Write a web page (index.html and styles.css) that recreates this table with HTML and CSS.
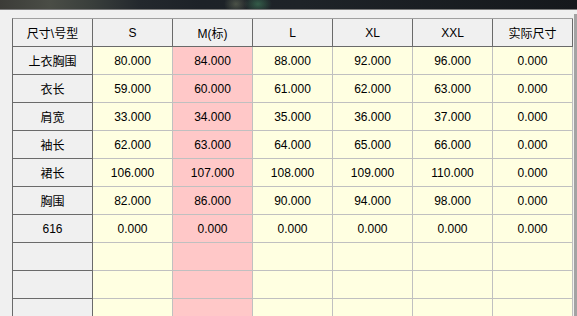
FILE: index.html
```html
<!DOCTYPE html>
<html lang="zh">
<head>
<meta charset="utf-8">
<title>尺寸表</title>
<link rel="stylesheet" href="styles.css">
</head>
<body>
<div class="titlebar"></div>
<div class="main">
  <div class="grid">
    <div class="hd corner">尺寸\号型</div>
    <div class="hd">S</div>
    <div class="hd">M(标)</div>
    <div class="hd">L</div>
    <div class="hd">XL</div>
    <div class="hd">XXL</div>
    <div class="hd">实际尺寸</div>

    <div class="rh">上衣胸围</div>
    <div class="c">80.000</div><div class="c m">84.000</div><div class="c">88.000</div><div class="c">92.000</div><div class="c">96.000</div><div class="c">0.000</div>

    <div class="rh">衣长</div>
    <div class="c">59.000</div><div class="c m">60.000</div><div class="c">61.000</div><div class="c">62.000</div><div class="c">63.000</div><div class="c">0.000</div>

    <div class="rh">肩宽</div>
    <div class="c">33.000</div><div class="c m">34.000</div><div class="c">35.000</div><div class="c">36.000</div><div class="c">37.000</div><div class="c">0.000</div>

    <div class="rh">袖长</div>
    <div class="c">62.000</div><div class="c m">63.000</div><div class="c">64.000</div><div class="c">65.000</div><div class="c">66.000</div><div class="c">0.000</div>

    <div class="rh">裙长</div>
    <div class="c">106.000</div><div class="c m">107.000</div><div class="c">108.000</div><div class="c">109.000</div><div class="c">110.000</div><div class="c">0.000</div>

    <div class="rh">胸围</div>
    <div class="c">82.000</div><div class="c m">86.000</div><div class="c">90.000</div><div class="c">94.000</div><div class="c">98.000</div><div class="c">0.000</div>

    <div class="rh">616</div>
    <div class="c">0.000</div><div class="c m">0.000</div><div class="c">0.000</div><div class="c">0.000</div><div class="c">0.000</div><div class="c">0.000</div>

    <div class="rh"></div>
    <div class="c"></div><div class="c m"></div><div class="c"></div><div class="c"></div><div class="c"></div><div class="c"></div>

    <div class="rh"></div>
    <div class="c"></div><div class="c m"></div><div class="c"></div><div class="c"></div><div class="c"></div><div class="c"></div>

    <div class="rh"></div>
    <div class="c"></div><div class="c m"></div><div class="c"></div><div class="c"></div><div class="c"></div><div class="c"></div>
  </div>
  <div class="scroll"></div>
</div>
</body>
</html>
```

FILE: styles.css
```css
html, body {
  margin: 0;
  padding: 0;
}
body {
  width: 577px;
  height: 316px;
  overflow: hidden;
  background: #f0f0f0;
  font-family: "Liberation Sans", "Noto Sans CJK SC", sans-serif;
  font-size: 12px;
  color: #000;
}
.titlebar {
  height: 9px;
  border-bottom: 1px solid #7a7a7a;
  background:
    radial-gradient(ellipse 14px 10px at 258px 4px, rgba(70,140,100,0.55), rgba(0,0,0,0) 100%),
    radial-gradient(ellipse 12px 10px at 236px 4px, rgba(160,170,130,0.35), rgba(0,0,0,0) 100%),
    linear-gradient(90deg, #3c3c38 0px, #4a4d46 50px, #3a3f3c 90px, #23282d 140px, #1d2228 200px, #1e2328 300px, #15181c 577px);
}
.main {
  display: flex;
  padding-top: 8px;
  padding-left: 12px;
}
.grid {
  display: grid;
  grid-template-columns: repeat(7, 80px);
  grid-auto-rows: 28px;
  border-left: 1px solid #6a6a6a;
  border-top: 1px solid #a0a0a0;
}
.grid > div {
  box-sizing: border-box;
  display: flex;
  align-items: center;
  justify-content: center;
  white-space: nowrap;
}
.hd {
  background: #f0f0f0;
  border-right: 1px solid #6a6a6a;
  border-bottom: 1px solid #6a6a6a;
}
.rh {
  background: #f0f0f0;
  border-right: 1px solid #6a6a6a;
  border-bottom: 1px solid #6a6a6a;
}
.c {
  background: #ffffe1;
  border-right: 1px solid #c0c0c0;
  border-bottom: 1px solid #c0c0c0;
}
.c.m {
  background: #ffc8c8;
}
.scroll {
  width: 3px;
  margin-left: 1px;
  margin-top: -4px;
  background: #a3a3a3;
  align-self: stretch;
}
```
